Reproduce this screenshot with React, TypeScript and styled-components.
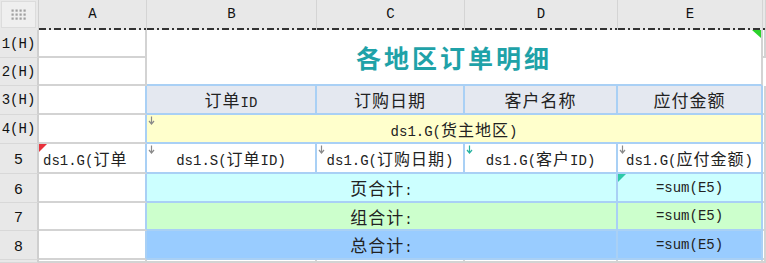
import React from 'react'
import styled, { createGlobalStyle } from 'styled-components'

const GlobalStyle = createGlobalStyle`
  html, body {
    margin: 0;
    padding: 0;
    background: #fff;
    overflow: hidden;
  }
  * {
    box-sizing: border-box;
  }
`

const GRID = '#d3d3d3'
const BLUE = '#a9d0f5'
const HEAD_BG = '#e8e8e8'

const Sheet = styled.div`
  display: grid;
  grid-template-columns: 39px 108px 170px 148px 153px 145px 1fr;
  grid-template-rows: 30px 28px 28px 29px 29px 30px 29px 28px 29px 1fr;
  width: 766px;
  height: 263px;
  font-family: 'Liberation Mono', 'Noto Sans CJK SC', monospace;
  font-size: 14px;
  color: #222;
`

const Corner = styled.div`
  grid-column: 1;
  grid-row: 1;
  background: ${HEAD_BG};
  border-right: 1px solid #d0d0d0;
  padding: 1px 2px 2px 1px;
  div {
    height: 100%;
    background: #efefef;
    border: 1px solid #dcdcdc;
    display: flex;
    align-items: center;
    justify-content: center;
  }
`

const ColHead = styled.div<{ $col: number }>`
  grid-column: ${p => p.$col};
  grid-row: 1;
  display: flex;
  align-items: center;
  justify-content: center;
  padding-bottom: 2px;
  background-color: ${HEAD_BG};
  background-image: repeating-linear-gradient(
    90deg,
    #333 0 7px,
    transparent 7px 10px,
    #333 10px 12px,
    transparent 12px 15px
  );
  background-size: 100% 2px;
  background-position: left bottom;
  background-repeat: no-repeat;
  border-right: 1px solid #d4d4d4;
  color: #111;
  font-size: 14px;
`

const RowHead = styled.div<{ $row: number; $sans?: boolean }>`
  grid-column: 1;
  grid-row: ${p => p.$row};
  display: flex;
  align-items: center;
  justify-content: center;
  background: ${HEAD_BG};
  border-right: 2px solid #cfcfcf;
  border-bottom: 1px solid #d8d8d8;
  color: #111;
  font-family: ${p => (p.$sans ? "'Liberation Sans', sans-serif" : "'Liberation Mono', monospace")};
  font-size: ${p => (p.$sans ? '15px' : '14px')};
  white-space: nowrap;
`

const Cell = styled.div<{
  $col: string
  $row: string
  $bg?: string
  $right?: string
  $bottom?: string
  $start?: boolean
}>`
  grid-column: ${p => p.$col};
  grid-row: ${p => p.$row};
  position: relative;
  overflow: hidden;
  display: flex;
  align-items: center;
  justify-content: ${p => (p.$start ? 'flex-start' : 'center')};
  padding-left: ${p => (p.$start ? '4px' : '0')};
  background: ${p => p.$bg ?? '#fff'};
  border-right: 2px solid ${p => p.$right ?? GRID};
  border-bottom: 2px solid ${p => p.$bottom ?? GRID};
  white-space: nowrap;
`

const Title = styled.span`
  font-family: 'Noto Sans CJK SC', sans-serif;
  font-size: 25px;
  font-weight: 700;
  letter-spacing: 3px;
  color: #1fa2a8;
`

const Han = styled.span<{ $size?: number }>`
  font-family: 'Noto Sans CJK SC', sans-serif;
  font-size: ${p => p.$size ?? 16}px;
  letter-spacing: 1px;
`

const Flag = styled.span<{ $color: string; $corner: 'tl' | 'tr' }>`
  position: absolute;
  top: 0;
  ${p => (p.$corner === 'tl' ? 'left: 0;' : 'right: 0;')}
  width: 0;
  height: 0;
  border-top: 8px solid ${p => p.$color};
  ${p =>
    p.$corner === 'tl'
      ? 'border-right: 8px solid transparent;'
      : 'border-left: 9px solid transparent;'}
`

const ArrowMark = styled.svg`
  position: absolute;
  top: 1px;
  left: 1px;
`

const DownArrow = ({ color = '#8a8a8a' }: { color?: string }) => (
  <ArrowMark width="7" height="9" viewBox="0 0 7 9">
    <path d="M3.5 0.5 V7.5 M1 5 L3.5 8 L6 5" stroke={color} strokeWidth="1.2" fill="none" />
  </ArrowMark>
)

const Dots = () => (
  <svg width="16" height="12" viewBox="0 0 16 12">
    {[0, 1, 2].map(r =>
      [0, 1, 2, 3].map(c => (
        <rect key={`${r}-${c}`} x={c * 4 + 0.5} y={r * 4 + 0.5} width="2.2" height="2.2" fill="#a0a0a0" />
      ))
    )}
  </svg>
)

// wrap CJK runs so they can be sized apart from the half-width Latin text
const Mixed = ({ text, size }: { text: string; size?: number }) => (
  <span>
    {text.split(/([\u3000-\u9fff\uff00-\uffef]+)/).map((part, i) =>
      /[\u3000-\u9fff\uff00-\uffef]/.test(part) ? (
        <Han key={i} $size={size}>
          {part}
        </Han>
      ) : (
        <React.Fragment key={i}>{part}</React.Fragment>
      )
    )}
  </span>
)

const columns = ['A', 'B', 'C', 'D', 'E', '']
const rowLabels = ['1(H)', '2(H)', '3(H)', '4(H)', '5', '6', '7', '8', '']

const headers = ['订单ID', '订购日期', '客户名称', '应付金额']
const fields = ['ds1.S(订单ID)', 'ds1.G(订购日期)', 'ds1.G(客户ID)', 'ds1.G(应付金额)']
const totals = [
  { label: '页合计:', bg: '#ccffff' },
  { label: '组合计:', bg: '#ccffcc' },
  { label: '总合计:', bg: '#99ccff' },
]

export default function App() {
  return (
    <>
      <GlobalStyle />
      <Sheet>
        <Corner>
          <div>
            <Dots />
          </div>
        </Corner>
        {columns.map((c, i) => (
          <ColHead key={i} $col={i + 2}>
            {c}
          </ColHead>
        ))}
        {rowLabels.map((r, i) => (
          <RowHead key={i} $row={i + 2} $sans={!r.includes('H')}>
            {r}
          </RowHead>
        ))}

        {/* column A */}
        {[2, 3, 4, 5, 7, 8, 9, 10].map(row => (
          <Cell key={row} $col="2" $row={String(row)} $right={row >= 4 && row <= 9 ? BLUE : GRID} />
        ))}
        <Cell $col="2" $row="6" $right={BLUE} $start>
          <Flag $color="#e8323c" $corner="tl" />
          <Mixed text="ds1.G(订单" />
        </Cell>

        {/* title */}
        <Cell $col="3 / 7" $row="2 / 4" $bottom={BLUE}>
          <Flag $color="#2bd22b" $corner="tr" />
          <Title>各地区订单明细</Title>
        </Cell>

        {/* header row */}
        {headers.map((h, i) => (
          <Cell key={h} $col={String(i + 3)} $row="4" $bg="#e4e8f0" $right={BLUE} $bottom={BLUE}>
            <Mixed text={h} size={17} />
          </Cell>
        ))}

        {/* group row */}
        <Cell $col="3 / 7" $row="5" $bg="#ffffcc" $right={BLUE} $bottom={BLUE}>
          <DownArrow />
          <Mixed text="ds1.G(货主地区)" />
        </Cell>

        {/* detail row */}
        {fields.map((f, i) => (
          <Cell key={f} $col={String(i + 3)} $row="6" $right={BLUE} $bottom={BLUE}>
            {i === 2 ? <DownArrow color="#26b3a0" /> : <DownArrow />}
            <Mixed text={f} />
          </Cell>
        ))}

        {/* totals */}
        {totals.map((t, i) => (
          <React.Fragment key={t.label}>
            <Cell $col="3 / 6" $row={String(i + 7)} $bg={t.bg} $right={BLUE} $bottom={BLUE}>
              <Mixed text={t.label} size={17} />
            </Cell>
            <Cell $col="6" $row={String(i + 7)} $bg={t.bg} $right={BLUE} $bottom={BLUE}>
              {i === 0 && <Flag $color="#2ec9a8" $corner="tl" />}
              =sum(E5)
            </Cell>
          </React.Fragment>
        ))}

        {/* column F and row 9 */}
        {[2, 4, 5, 6, 7, 8, 9, 10].map(row => (
          <Cell key={`f${row}`} $col="7" $row={String(row)} />
        ))}
        {[3, 4, 5, 6].map(col => (
          <Cell key={`r9${col}`} $col={String(col)} $row="10" />
        ))}
      </Sheet>
    </>
  )
}
